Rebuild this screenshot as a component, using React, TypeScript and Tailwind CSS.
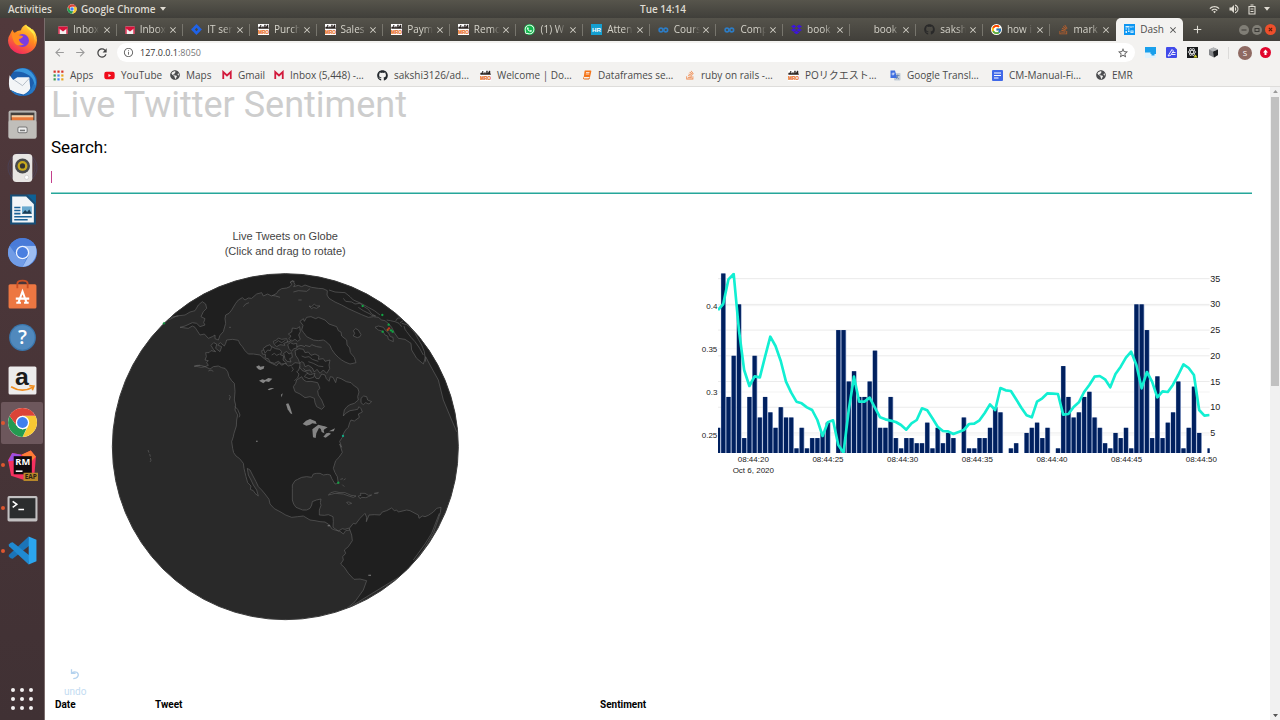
import type { ReactNode } from "react";
import { FaDropbox, FaGithub, FaJira, FaStackOverflow, FaWhatsapp, FaYoutube, FaGlobeAmericas } from "react-icons/fa";
import { FcGoogle } from "react-icons/fc";
import { MdArrowBack, MdArrowForward, MdRefresh, MdStarBorder, MdInfoOutline, MdWifi, MdVolumeUp, MdClose, MdAdd } from "react-icons/md";

/* ---------- small favicons ---------- */

const Gmail = ({ boxed = false }: { boxed?: boolean }) => (
  <svg viewBox="0 0 20 20" className="size-[10px] shrink-0">
    {boxed && <rect x="1" y="3" width="18" height="15" fill="#f4f0f0" />}
    {boxed && <path d="M1 3h18v3l-9 7-9-7z" fill="#d8123a" />}
    {boxed ? (
      <path d="M2 18V4M18 4v14" stroke="#d8123a" strokeWidth="2.500" />
    ) : (
      <path d="M2.500 18V4l7.500 7 7.500-7v14" fill="none" stroke="#d21a3c" strokeWidth="3.600" />
    )}
  </svg>
);

const Mro = () => (
  <svg viewBox="0 0 30 30" className="size-[11px] shrink-0">
    <rect width="30" height="30" fill="#fff" />
    <path d="M1 8q3-3 5 0V3h3v6h3V6h3v3h2V2h4v7l3-5V2h4v6l2 5H1z" fill="#2b2422" />
    <text x="15" y="26" fontSize="13" fontWeight="700" textAnchor="middle" fill="#e8722c" stroke="#e8722c" strokeWidth=".6" fontFamily="Liberation Sans, sans-serif">MRO</text>
  </svg>
);

const Rings = () => (
  <svg viewBox="0 0 22 12" className="w-[11px] shrink-0" fill="none" stroke="#2d7cc4" strokeWidth="3.200">
    <circle cx="6" cy="6" r="3.800" />
    <circle cx="15.500" cy="6" r="3.800" />
  </svg>
);

const Rank = () => (
  <svg viewBox="0 0 30 30" className="size-[11px] shrink-0">
    <rect width="30" height="30" fill="#149fd0" />
    <text x="15" y="21" fontSize="17" fontWeight="700" textAnchor="middle" fill="#fff" fontFamily="Liberation Sans, sans-serif">HR</text>
  </svg>
);

const DashLogo = () => (
  <svg viewBox="0 0 22 22" className="size-[11px] shrink-0">
    <rect width="22" height="22" fill="#0d96f2" />
    <path d="M3 4h8v3H3zM13 4h2v4h-2zM17 4h2v3h-2zM3 9h3v2H3zM8 9h3v2H8zM3 14h3v4H3zM8 13h3v3H8zM13 13h6v5h-6z" fill="#d7f1ff" />
    <rect x="15" y="14.500" width="2" height="2" fill="#0d96f2" />
  </svg>
);

const AppsGrid = () => (
  <svg viewBox="0 0 20 20" className="size-[11px] shrink-0">
    {["#d93025", "#d93025", "#d93025", "#3a9a4c", "#4285f4", "#e8a51c", "#3a9a4c", "#4285f4", "#e8a51c"].map((c, i) => (
      <rect key={i} x={1 + (i % 3) * 7} y={1 + Math.floor(i / 3) * 7} width="4" height="4" fill={c} />
    ))}
  </svg>
);

const Book = () => (
  <svg viewBox="0 0 20 20" className="size-[10px] shrink-0">
    <path d="M6 1h11q2 0 1.600 2l-2.500 11H3.500L5 3Q5.200 1 6 1z" fill="#f5761a" />
    <path d="M8 5h7M7.500 8h7" stroke="#fff" strokeWidth="1.500" />
    <path d="M3 15q-1 3 2 3h9l1-3" fill="none" stroke="#e56a12" strokeWidth="2" />
  </svg>
);

const Translate = () => (
  <svg viewBox="0 0 22 22" className="size-[11px] shrink-0">
    <rect x="8" y="6" width="13" height="15" rx="1.500" fill="#c4cdd8" />
    <path d="M12 11h7M15.500 9v2q0 5-4 7M13 13q2 4 5 5" stroke="#5b7ba5" strokeWidth="1.400" fill="none" />
    <path d="M1 1h9l4 15H1z" fill="#3f6fe0" />
    <path d="M9.500 6.500H6.500v2h1.400Q7.500 10 6 10 4 10 4 8t2-2q.8 0 1.400.500" stroke="#fff" strokeWidth="1.200" fill="none" />
  </svg>
);

const Doc = () => (
  <svg viewBox="0 0 22 22" className="size-[11px] shrink-0">
    <rect width="22" height="22" rx="2" fill="#4068e8" />
    <path d="M4 6h14M4 11h14M4 16h9" stroke="#fff" strokeWidth="2.200" />
  </svg>
);

const Youtube = () => <FaYoutube className="size-[11px] shrink-0 text-[#f00b1a]" />;
const Globe = () => <FaGlobeAmericas className="size-[10px] shrink-0 text-[#4b4c4e]" />;

/* ---------- launcher icons ---------- */

const Svg = ({ children, title }: { children: ReactNode; title: string }) => (
  <svg viewBox="0 0 60 60" className="size-[31px]" role="img" aria-label={title}>
    {children}
  </svg>
);

const ChromeMark = () => (
  <>
    <circle cx="30" cy="30" r="28" fill="#fff" />
    <path d="M30 17H54.900A28 28 0 0 1 30 58L41.300 36.500z" fill="#f8c933" />
    <path d="M5.100 17.500 18.700 36.500 30 43.500 38 41 30 58A28 28 0 0 1 5.100 17.500z" fill="#249a50" />
    <path d="M5.100 17.500A28 28 0 0 1 54.900 17H30Q20 18 17 34z" fill="#dc4437" />
    <circle cx="30" cy="30" r="13" fill="#fff" />
    <circle cx="30" cy="30" r="10.500" fill="#3f80ee" />
  </>
);

const launchers: { name: string; active?: boolean; running?: boolean; art: ReactNode }[] = [
  {
    name: "Firefox",
    art: (
      <>
        <defs>
          <linearGradient id="ff" x1=".8" y1="0" x2=".3" y2="1">
            <stop offset="0" stopColor="#ffe23e" />
            <stop offset=".45" stopColor="#ff8a1e" />
            <stop offset="1" stopColor="#f22560" />
          </linearGradient>
        </defs>
        <path d="M6 20Q8 14 11 11q1 5 4 6 5-5 12-5 2-8 10-11 2 6 8 10l5-1q8 9 8 21c0 17-13 27-28 27S2 47 2 32q0-7 4-12z" fill="url(#ff)" />
        <path d="M36 2q2 6 9 11 12 10 8 27 5-14-3-24 9 9 8 20Q58 12 36 2z" fill="#fff04a" />
        <circle cx="30" cy="32" r="12.500" fill="#7b3ce0" />
        <path d="M9 18q10-1 14 4l8 1q-1 5-8 6 1 9 10 10-14 7-20-5-4-8-4-16z" fill="#ff8c20" />
      </>
    ),
  },
  {
    name: "Thunderbird",
    art: (
      <>
        <circle cx="31" cy="31" r="27" fill="#1c5fae" />
        <path d="M12 11q20-14 36 2 14 16 4 34 4-18-8-28-14-10-32-8z" fill="#3a97dd" />
        <path d="M5 18Q2 38 6 46l12 6 14 3q10-4 13-12L43 22 20 22 12 27z" fill="#f3f5f7" />
        <path d="m14 27 16 11 14-15" fill="none" stroke="#a5afba" strokeWidth="1.500" />
        <path d="M6 46Q14 58 30 58q-6-3-12-6zM51 34q-4 17-20 23 22 0 25-18z" fill="#2577c4" />
      </>
    ),
  },
  {
    name: "Files",
    art: (
      <>
        <rect x="3" y="3" width="54" height="54" rx="4" fill="#b5b3b0" />
        <rect x="7" y="7" width="46" height="17" fill="#433f3c" />
        <path d="M9 15h42v8H9z" fill="#e8793a" />
        <path d="M9 12h42v4H9z" fill="#f6d0a6" />
        <rect x="3" y="22" width="54" height="35" rx="3" fill="#c0beba" />
        <rect x="21" y="35" width="18" height="11" rx="3" fill="#eee" stroke="#777" strokeWidth="2" />
        <rect x="25" y="40" width="10" height="3" fill="#777" />
      </>
    ),
  },
  {
    name: "Rhythmbox",
    art: (
      <>
        <circle cx="30" cy="30" r="28" fill="none" stroke="#4c4052" strokeWidth="2" />
        <circle cx="30" cy="30" r="24" fill="none" stroke="#4c4052" strokeWidth="2" />
        <rect x="11" y="4" width="38" height="54" rx="7" fill="#e7e5e3" />
        <circle cx="30" cy="27" r="14.500" fill="#484a4c" />
        <circle cx="30" cy="27" r="9.500" fill="#c6a81e" />
        <circle cx="30" cy="27" r="5" fill="#333" />
        <circle cx="38" cy="49" r="4" fill="#fff" stroke="#bbb" />
      </>
    ),
  },
  {
    name: "LibreOffice Writer",
    art: (
      <>
        <path d="M6 1h32l18 18v40H6z" fill="#174f78" />
        <path d="M10 5h27l15 15v35H10z" fill="#f1f5f8" />
        <path d="M38 1h18v18z" fill="#0d6196" />
        <path d="M14 26h12M14 32h12M14 38h12M14 44h34M14 50h26" stroke="#1a6296" strokeWidth="3" />
        <rect x="29" y="24" width="19" height="14" fill="#68a9cf" />
        <path d="m29 38 6-7 4 4 4-5 5 8z" fill="#193e58" />
      </>
    ),
  },
  {
    name: "Chromium",
    art: (
      <>
        <circle cx="30" cy="30" r="28" fill="#4c7fd9" />
        <path d="M5 17 20 38q6 8 17 4L30 58Q9 57 3 38 0 27 5 17z" fill="#719ce6" />
        <path d="M30 17h25q5 14-2 26-8 14-23 15l11-20q4-12-11-21z" fill="#9dbdf2" />
        <path d="M5 17Q14 3 30 2q17 1 25 15H30z" fill="#4a7bd8" />
        <circle cx="30" cy="30" r="13" fill="#eff4ff" />
        <circle cx="30" cy="30" r="10.500" fill="#4a7fe0" />
      </>
    ),
  },
  {
    name: "Ubuntu Software",
    art: (
      <>
        <rect x="3" y="10" width="54" height="47" rx="3" fill="#ed7742" />
        <path d="M20 18V9q0-6 10-6t10 6v9" fill="none" stroke="#c94f24" strokeWidth="3.500" />
        <path d="m22 46 8-22 8 22M17 38h26M18 46h9M33 46h9" fill="none" stroke="#fff" strokeWidth="4" />
      </>
    ),
  },
  {
    name: "Help",
    art: (
      <>
        <circle cx="30" cy="30" r="26" fill="#3a76ac" />
        <circle cx="30" cy="30" r="23.500" fill="#5089bd" />
        <text x="30" y="43" fontSize="38" fontWeight="600" textAnchor="middle" fill="#fff" fontFamily="Open Sans, sans-serif">?</text>
      </>
    ),
  },
  {
    name: "Amazon",
    art: (
      <>
        <rect x="3" y="3" width="54" height="54" rx="3" fill="#edecec" />
        <text x="29" y="38" fontSize="48" fontWeight="700" textAnchor="middle" fill="#1b1b1b" fontFamily="Liberation Sans, sans-serif">a</text>
        <path d="M8 42q21 13 42 1M43 40l9 1-3 8" fill="none" stroke="#f08d1e" strokeWidth="3.200" />
      </>
    ),
  },
  { name: "Google Chrome", active: true, running: true, art: <ChromeMark /> },
  {
    name: "RubyMine",
    running: true,
    art: (
      <>
        <path d="M2 20 10 6l18 3L46 1l10 12-3 35-20 10L8 50z" fill="#f5315f" />
        <path d="M10 6 28 9 18 20 2 22z" fill="#9b4fe0" />
        <path d="M46 1 28 9l18 14 10-10z" fill="#fd7d36" />
        <rect x="13" y="12" width="35" height="35" fill="#100b0d" />
        <text x="30.500" y="29" fontSize="18" fontWeight="700" textAnchor="middle" fill="#fff" fontFamily="Open Sans, sans-serif">RM</text>
        <path d="M17 41h13" stroke="#fff" strokeWidth="3" />
        <rect x="32" y="44" width="28" height="16" fill="#b7872a" />
        <text x="46" y="56.500" fontSize="12.500" fontWeight="700" textAnchor="middle" fill="#2d2013" fontFamily="Open Sans, sans-serif">EAP</text>
      </>
    ),
  },
  {
    name: "Terminal",
    running: true,
    art: (
      <>
        <rect x="1" y="6" width="58" height="49" rx="3" fill="#c2c0c1" />
        <rect x="5" y="10" width="50" height="39" fill="#2b2d2e" />
        <path d="m11 16 8 6-8 6M22 32h11" fill="none" stroke="#fff" strokeWidth="3" />
      </>
    ),
  },
  {
    name: "Visual Studio Code",
    running: true,
    art: (
      <>
        <path d="M42 3 4 38l-1 3 4 4 4 1L43 21z" fill="#1b74b8" />
        <path d="M42 57 4 22l-1-3 4-4 4-1 32 25z" fill="#1f8ad2" />
        <path d="M42 3 57 9v42l-15 6z" fill="#2ba5ee" />
      </>
    ),
  },
];

/* ---------- browser chrome ---------- */

const github = (cls: string) => <FaGithub className={`size-[11px] shrink-0 ${cls}`} />;

const tabs: { label: string; icon: ReactNode }[] = [
  { label: "Inbox", icon: <Gmail boxed /> },
  { label: "Inbox", icon: <Gmail boxed /> },
  { label: "IT ser", icon: <FaJira className="size-[11px] shrink-0 text-[#1f62e8]" /> },
  { label: "Purch", icon: <Mro /> },
  { label: "Sales", icon: <Mro /> },
  { label: "Paym", icon: <Mro /> },
  { label: "Remo", icon: <Mro /> },
  { label: "(1) W", icon: <FaWhatsapp className="size-[11px] shrink-0 rounded-full bg-[#12b84d] text-white" /> },
  { label: "Atten", icon: <Rank /> },
  { label: "Cours", icon: <Rings /> },
  { label: "Comp", icon: <Rings /> },
  { label: "book", icon: <FaDropbox className="size-[11px] shrink-0 text-[#3c14dc]" /> },
  { label: "book", icon: <span className="size-[11px] shrink-0" /> },
  { label: "saksh", icon: github("text-[#292929]") },
  { label: "how i", icon: <FcGoogle className="size-[11px] shrink-0 rounded-full bg-white" /> },
  { label: "mark", icon: <FaStackOverflow className="size-[11px] shrink-0 text-[#b85f2c]" /> },
  { label: "Dash", icon: <DashLogo /> },
];

const bookmarks: { label: string; icon: ReactNode }[] = [
  { label: "Apps", icon: <AppsGrid /> },
  { label: "YouTube", icon: <Youtube /> },
  { label: "Maps", icon: <Globe /> },
  { label: "Gmail", icon: <Gmail /> },
  { label: "Inbox (5,448) -…", icon: <Gmail /> },
  { label: "sakshi3126/ad…", icon: github("text-[#24292e]") },
  { label: "Welcome | Do…", icon: <Mro /> },
  { label: "Dataframes se…", icon: <Book /> },
  { label: "ruby on rails -…", icon: <FaStackOverflow className="size-[10px] shrink-0 text-[#ef8445]" /> },
  { label: "POリクエスト…", icon: <Mro /> },
  { label: "Google Transl…", icon: <Translate /> },
  { label: "CM-Manual-Fi…", icon: <Doc /> },
  { label: "EMR", icon: <Globe /> },
];

function TopBar() {
  return (
    <header className="flex h-[18px] shrink-0 items-center bg-linear-to-b from-[#57554c] to-[#403f3a] text-[10px] font-semibold text-[#dfdbd2]">
      <div className="flex w-1/2 items-center">
        <button className="ml-2 w-[59px] text-left">Activities</button>
        <button className="flex items-center gap-1">
          <svg viewBox="0 0 60 60" className="size-[10px]"><ChromeMark /></svg>
          Google Chrome
          <svg viewBox="0 0 8 5" className="w-[6px]"><path d="M0 0h8L4 5z" fill="#dfdbd2" /></svg>
        </button>
      </div>
      <time>Tue 14:14</time>
      <div className="mr-[10px] ml-auto flex items-center gap-2">
        <MdWifi className="size-[11px]" />
        <MdVolumeUp className="size-[12px]" />
        <svg viewBox="0 0 16 22" className="h-[11px]" fill="none" stroke="#dfdbd2" strokeWidth="2.200">
          <path d="M2 5h12v15H2zM5 2h6M5 10h6M5 15h6" />
        </svg>
        <svg viewBox="0 0 8 5" className="w-[6px]"><path d="M0 0h8L4 5z" fill="#dfdbd2" /></svg>
      </div>
    </header>
  );
}

function Dock() {
  return (
    <nav className="flex w-[45px] shrink-0 flex-col justify-between border-r border-[#7b6d6d] bg-linear-to-b from-[#51393c] to-[#403134]">
      <ul className="grid h-[554px] auto-rows-fr">
        {launchers.map((l) => (
          <li key={l.name} className="flex">
            <button aria-label={l.name} className={l.active ? "relative mx-px flex flex-1 items-center justify-center rounded-[2px] bg-[#6d575c]" : "relative mx-px flex flex-1 items-center justify-center"}>
              {l.running && <span className="absolute top-1/2 left-0 size-[4px] -translate-y-1/2 rounded-full bg-[#dd5730]" />}
              <Svg title={l.name}>{l.art}</Svg>
            </button>
          </li>
        ))}
      </ul>
      <button aria-label="Show applications" className="mb-[10px] grid grid-cols-3 gap-[5px] self-center">
        {Array.from({ length: 9 }, (_, i) => (
          <span key={i} className="size-[4px] rounded-full bg-[#f4f1f1]" />
        ))}
      </button>
    </nav>
  );
}

function TabStrip() {
  return (
    <div className="flex h-[23px] bg-linear-to-b from-[#55534b] to-[#413f3a] pl-[5px] text-[10px]">
      <div role="tablist" className="flex flex-1">
        {tabs.map((t, i) => {
          const on = i === tabs.length - 1;
          return (
            <button
              key={i}
              role="tab"
              aria-selected={on}
              className={
                on
                  ? "flex min-w-0 flex-1 basis-0 items-center rounded-t-[5px] bg-[#f3f2f0] pl-2 text-[#4c4c4c]"
                  : "flex min-w-0 flex-1 basis-0 items-center pl-2 text-[#d5d3ca]"
              }
            >
              {t.icon}
              <span className={on ? "ml-[5px] text-left whitespace-nowrap" : "ml-[5px] w-[26px] text-left whitespace-nowrap [mask-image:linear-gradient(to_right,#000_65%,transparent)]"}>
                {t.label}
              </span>
              <MdClose className="ml-auto size-[10px] shrink-0" />
              <span className={i >= tabs.length - 2 ? "ml-[4px] h-3 w-px" : "ml-[4px] h-3 w-px bg-[#77756d]"} />
            </button>
          );
        })}
      </div>
      <div className="flex w-[97px] items-center">
        <button aria-label="New tab" className="ml-2 text-[#e0ded6]"><MdAdd className="size-[13px]" /></button>
        <div className="mr-1 ml-auto flex gap-[3px]">
          <button aria-label="Minimize"><svg viewBox="0 0 20 20" className="size-[10px]"><circle cx="10" cy="10" r="10" fill="#807e76" /><path d="M5 10h10" stroke="#3c3b37" strokeWidth="2" /></svg></button>
          <button aria-label="Maximize"><svg viewBox="0 0 20 20" className="size-[10px]"><circle cx="10" cy="10" r="10" fill="#807e76" /><rect x="6" y="7" width="8" height="6" fill="none" stroke="#3c3b37" strokeWidth="2" /></svg></button>
          <button aria-label="Close"><svg viewBox="0 0 20 20" className="size-[11px]"><circle cx="10" cy="10" r="10" fill="#ee4f2b" /><path d="m7 7 6 6m0-6-6 6" stroke="#5b1d0c" strokeWidth="2" /></svg></button>
        </div>
      </div>
    </div>
  );
}

function Toolbar() {
  return (
    <div className="flex h-[23px] items-center bg-[#f3f2f0] pr-[9px] pl-2">
      <button aria-label="Back" className="text-[#9b9b9b]"><MdArrowBack className="size-[13px]" /></button>
      <button aria-label="Forward" className="ml-2 text-[#9b9b9b]"><MdArrowForward className="size-[13px]" /></button>
      <button aria-label="Reload" className="ml-2 text-[#444]"><MdRefresh className="size-[14px]" /></button>
      <div className="ml-2 flex h-[19px] flex-1 items-center rounded-full bg-white pr-1.5 pl-1.5">
        <MdInfoOutline className="size-[11px] shrink-0 text-[#666]" />
        <p className="ml-1.5 flex-1 text-[9px] leading-[19px] text-[#777]">
          <span className="text-[#333]">127.0.0.1</span>:8050
        </p>
        <button aria-label="Bookmark this page" className="text-[#555]"><MdStarBorder className="size-[12px]" /></button>
      </div>
      <div className="ml-[10px] flex items-center gap-[10px]">
        <svg viewBox="0 0 22 22" className="size-[11px]"><rect width="22" height="22" fill="#dff2fd" /><path d="M0 0h22v14H11v-3H0z" fill="#1aa0ec" /><path d="M13 14h6v3h-6z" fill="#1aa0ec" /></svg>
        <svg viewBox="0 0 22 22" className="size-[11px]"><rect width="22" height="22" rx="2" fill="#414bea" /><path d="m4 18 8-13 3 3-6 9zM12 11h7M11 15h8" stroke="#fff" strokeWidth="1.800" fill="none" /><path d="M17 0h5v5z" fill="#f3f2f0" /></svg>
        <svg viewBox="0 0 22 22" className="size-[11px]"><rect width="22" height="22" fill="#17191a" /><g fill="none" stroke="#e6e6e6" strokeWidth="1.500"><ellipse cx="10" cy="10" rx="8" ry="3.200" /><ellipse cx="10" cy="10" rx="8" ry="3.200" transform="rotate(60 10 10)" /><ellipse cx="10" cy="10" rx="8" ry="3.200" transform="rotate(120 10 10)" /></g><path d="m17 15 4 6h-8z" fill="#d8d82d" /></svg>
        <svg viewBox="0 0 22 22" className="size-[11px]"><path d="m2 5 9-4 9 4v11l-8 5-10-5z" fill="#85878a" /><path d="m10 9 10-4v11l-8 5z" fill="#1d1f21" /><path d="m2 5 9-4 9 4-10 4z" fill="#b3b5b7" /></svg>
      </div>
      <span className="mx-[9px] h-3 w-px bg-[#dcdbd9]" />
      <span className="flex size-[14px] items-center justify-center rounded-full bg-[#8f6a62] text-[8px] text-white">S</span>
      <svg viewBox="0 0 22 22" className="ml-[8px] size-[11px]"><circle cx="11" cy="11" r="11" fill="#e1062c" /><path d="m11 5 5 6h-3v5H9v-5H6z" fill="#fff" /></svg>
    </div>
  );
}

function Bookmarks() {
  return (
    <nav className="grid h-[23px] grid-cols-[51px_66px_52px_52px_103px_103px_102px_103px_103px_102px_102px_104px_auto] items-center border-b border-[#dedddb] bg-[#f3f2f0] pl-2 text-[10px] text-[#4a4a4a]">
      {bookmarks.map((b) => (
        <a key={b.label} href="#" className="flex items-center gap-[6px] whitespace-nowrap">
          {b.icon}
          {b.label}
        </a>
      ))}
    </nav>
  );
}

/* ---------- globe ---------- */

const land = [
  // North and Central America
  "M365 360 383 358 400 361 405 372 412 380 420 392 430 402 445 402 465 405 478 416 490 425 502 431 515 437 522 428 530 436 540 430 550 438 560 436 570 428 585 430 584 442 592 452 605 456 612 466 620 470 626 462 633 475 642 476 650 462 660 465 664 476 672 484 676 470 684 472 692 488 696 472 708 476 724 485 738 488 748 498 758 504 762 516 758 530 760 540 748 550 735 554 726 560 718 570 715 588 722 580 735 572 748 570 758 568 762 560 768 566 772 576 760 582 763 592 748 603 738 600 734 608 730 622 722 630 716 640 712 652 704 664 710 682 704 672 712 697 702 712 692 722 685 745 690 758 697 770 700 790 690 792 684 782 680 775 676 765 667 763 655 765 645 760 635 760 625 762 620 772 605 770 590 772 578 778 570 782 562 795 562 805 562 840 566 852 573 862 593 870 605 870 615 865 620 855 622 845 634 840 648 837 646 848 648 856 643 870 643 885 658 886 670 884 684 890 685 905 684 922 700 933 712 926 720 928 733 924 735 930 722 932 715 942 705 934 690 930 680 926 675 916 660 906 645 905 630 902 615 900 595 888 578 890 560 892 542 885 525 875 508 866 495 852 492 838 480 822 470 810 460 800 453 785 444 768 435 750 427 745 430 765 438 780 445 795 455 810 460 828 450 820 445 812 436 808 438 798 428 788 423 770 420 758 417 745 415 730 404 716 393 708 386 698 383 685 380 665 385 650 387 640 394 618 395 600 398 585 390 570 392 555 388 540 390 515 388 490 380 482 372 470 368 455 360 445 350 443 340 438 325 440 315 447 300 440 290 442 268 438 285 436 300 440 310 436 305 428 310 422 300 420 304 410 302 398 312 398 318 392 332 395 325 388 318 376 326 368 335 372 332 385 345 395 350 380 338 375 346 368 358 378 362 370z",
  // South America
  "M733 925 745 910 752 912 765 895 780 880 785 892 784 905 792 885 808 884 825 885 832 876 845 872 860 864 868 872 875 870 880 876 905 870 915 872 930 880 940 885 942 895 952 888 960 890 970 886 985 876 995 865 1008 862 1006 878 1002 890 985 940 955 990 900 1060 720 1170 750 1145 775 1110 785 1082 765 1077 747 1078 730 1060 718 1042 707 1032 715 1020 713 1010 722 1000 718 990 730 980 742 962 740 945z",
  // Siberia, across the top to Europe
  "M183 300 195 298 215 288 240 285 255 276 270 272 280 255 292 245 302 252 305 265 295 275 288 290 300 296 296 308 300 315 285 320 275 310 262 308 240 318 225 322 250 325 262 318 270 322 285 345 298 342 310 355 322 350 330 345 330 356 340 360 345 346 355 335 362 310 360 296 362 285 372 280 380 270 392 250 400 240 412 233 420 240 430 234 440 235 455 222 470 218 475 228 488 222 500 228 515 220 520 212 530 206 545 204 555 200 560 193 556 186 564 182 570 194 566 200 580 196 590 200 600 195 620 202 640 205 654 206 667 212 666 225 672 235 690 246 710 255 730 266 750 275 770 284 790 292 805 290 820 292 830 300 840 302 852 312 860 322 868 338 880 355 900 358 918 370 920 390 935 415 955 432 962 410 975 435 1000 480 1015 540 1040 600 1055 635 1090 660 1090 90 180 90z",
  // Greenland
  "M585 304 595 296 598 304 605 292 618 290 632 296 640 292 660 300 672 312 695 320 700 332 708 336 710 348 725 360 726 375 734 384 736 398 748 412 753 428 735 432 720 426 710 420 700 412 690 402 680 388 675 376 662 364 655 360 640 362 625 360 605 350 596 338 590 330 594 316z",
  // Baffin and neighbours
  "M570 392 582 386 595 388 600 398 610 396 618 406 630 402 642 408 640 418 655 416 660 424 675 420 672 435 674 446 665 460 655 450 645 460 636 448 628 456 622 444 610 436 600 440 596 428 590 425 584 430 580 418 572 406z",
  "M470 392 480 388 484 378 492 384 500 380 512 386 524 388 530 395 526 404 536 408 534 420 545 430 530 432 520 424 508 430 495 426 490 416 480 414 482 404 472 402z",
  "M550 342 560 336 562 324 575 326 584 320 586 335 581 345 586 358 578 364 570 358 560 364 552 356 558 348z",
  "M475 385 485 378 495 374 500 382 496 392 488 390 480 400z",
  "M505 364 515 360 520 354 530 358 545 356 548 366 536 370 540 376 525 374 515 380 508 374z",
  "M548 374 556 368 565 372 575 370 576 384 566 386 560 394 552 386z",
  "M536 400 545 394 552 402 560 398 562 412 554 416 558 426 546 424 540 416z",
  "M598 470 606 460 616 464 630 460 626 472 612 476z",
  // Newfoundland, Iceland, British Isles, Svalbard
  "M768 535 776 528 785 530 788 540 800 545 792 552 782 548 775 554 768 548z",
  "M745 332 752 326 760 330 768 344 765 350 757 353 745 348 749 340z",
  "M810 322 820 318 835 322 842 332 850 338 856 350 864 352 865 365 850 358 848 348 840 345 834 334 820 330z",
  "M612 258 620 260 628 252 634 258 645 258 635 265 625 262 620 266z",
  // Caribbean
  "M670 825 678 818 690 815 705 818 720 818 738 826 753 828 745 832 732 828 715 822 690 820z",
  "M760 828 768 826 766 820 780 820 790 826 800 825 790 830 782 833 770 832 765 836z",
  "M725 847 732 846 740 850 730 853zM808 820 820 817 818 821z",
];

const coastLines =
  "M672 210 690 216 720 218 735 230 745 240 768 250 790 262 808 272 825 285M715 235 722 244 740 246 750 252 765 250 780 262 790 268 800 282 812 288 800 286 795 282 775 272 760 262M845 300 856 302 870 305 882 310 890 320M872 303 878 294 888 294 895 302 885 308M890 310 905 314 915 322 930 340 940 358 950 375 958 395 962 425M897 318 900 328 905 335 918 352 930 365 944 385 955 405M1003 880 980 940 960 972 925 1020M415 260 422 252 432 248M372 322h6M500 226 512 228 525 232M510 370 520 362 530 368 542 360M585 440 580 452 575 455 582 462 578 474 568 482M595 445 602 452 615 450 620 458M560 360 552 366 545 365M600 376 615 380 620 374 635 380 650 382M575 380 588 376 600 380M500 405 508 400 515 406 524 402M560 440 565 448 560 455M590 408 600 412 612 410 622 418 640 424M610 425 625 430 640 438 655 440M372 525 376 530 373 540M390 560 398 568 405 585 402 592M129 690l3 8M134 702l2 8M136 714l2 7-3 5M710 178q-6-4-10 4M555 188q4-8 14-4M190 296 205 290 220 288M268 440 276 436 285 436M310 453 318 450 325 454M565 216 580 212 605 214 615 206M580 240h10M706 778 714 776M716 780l6-4M712 794l6 6";

const lakes = [
  "M453 440 462 436 466 440 478 438 476 446 466 450 460 448z",
  "M462 482 472 478 480 480 490 474 502 476 492 486 482 484 475 490z",
  "M488 508 498 504 508 505 492 511z",
  "M528 524 533 520 530 532z",
  "M543 552 550 550 555 560 562 583 556 580 548 568z",
  "M593 612 603 602 615 597 632 604 635 612 622 610 615 614 604 617z",
  "M622 628 640 614 652 617 668 622 655 630 642 624 634 640 632 654 624 652z",
  "M645 618 662 620 656 630 658 640 650 636z",
  "M655 650 664 640 672 638 678 641 662 653z",
  "M672 634 690 625 686 634z",
  "M453 662h5v3h-5zM668 916h7v3h-7zM790 1064h8v3h-8z",
];

const tweets: [number, number, string][] = [
  [177, 310, "#0f8f3c"],
  [773, 258, "#12a343"],
  [832, 285, "#12a343"],
  [851, 314, "#12a343"],
  [833, 335, "#12a343"],
  [852, 325, "#c8321e"],
  [858, 331, "#12a343"],
  [863, 335, "#12a343"],
  [848, 330, "#a8541e"],
  [714, 648, "#12a884"],
  [700, 788, "#12a343"],
];

function GlobeFigure() {
  return (
    <figure className="flex w-[39%] flex-col items-center pt-[35px]">
      <figcaption className="text-center font-['Liberation_Sans',Arial,sans-serif] text-[11px] leading-[15px] text-[#444]">
        Live Tweets on Globe
        <br />
        (Click and drag to rotate)
      </figcaption>
      <svg viewBox="0 126 1080 1104" className="mt-[3px] h-[368px] w-[360px]" role="img" aria-label="Globe">
        <defs>
          <clipPath id="disc"><circle cx="541" cy="680" r="519" /></clipPath>
        </defs>
        <circle cx="541" cy="680" r="519" fill="#292929" />
        <g clipPath="url(#disc)" stroke="#626262" strokeWidth="1.900" strokeLinejoin="round">
          {land.map((d, i) => <path key={i} d={d} fill="#1f1f1f" />)}
          <path d="M590 470 596 480 605 485 618 484 638 488 645 505 638 512 640 525 650 540 658 560 650 568 635 560 630 548 628 535 615 530 600 533 585 522 570 515 565 500 572 490 575 480z" fill="#292929" />
          <path d={coastLines} fill="none" />
          <g fill="#858585" stroke="none">{lakes.map((d, i) => <path key={i} d={d} />)}</g>
        </g>
        <circle cx="541" cy="680" r="519" fill="none" stroke="#3c3c3c" strokeWidth="3" />
        {tweets.map(([x, y, c], i) => <circle key={i} cx={x} cy={y} r="3.500" fill={c} />)}
      </svg>
    </figure>
  );
}

/* ---------- volume / sentiment chart ---------- */

const volume = [
  6, 36, 12, 20, 30, 4, 12, 20, 8, 12, 9, 6, 10, 8, 8, 2, 6, 2, 4, 4, 5, 7, 0, 25, 25, 15, 17, 12, 12, 15, 21, 6, 6, 12, 4, 2, 4, 4, 3, 3, 7, 2, 6, 3, 5, 4, 0, 8, 2, 2, 4, 4, 6, 10, 9, 0, 2, 3, 0, 5, 6, 7, 4, 6, 0, 2, 18, 12, 8, 9, 12, 13, 8, 6, 3, 2, 5, 4, 6, 2, 30, 30, 25, 4, 16, 4, 7, 9, 15, 2, 6, 14, 5, 0, 2,
];

const sentiment = [
  150, 132, 58, 42, 210, 330, 378, 349, 352, 290, 230, 258, 303, 365, 398, 425, 430, 442, 450, 480, 528, 487, 481, 555, 578, 450, 350, 425, 425, 413, 443, 472, 478, 482, 486, 495, 509, 490, 480, 445, 451, 475, 500, 513, 514, 522, 516, 510, 492, 491, 481, 459, 433, 450, 384, 391, 393, 418, 443, 466, 472, 425, 415, 400, 401, 402, 464, 462, 441, 427, 396, 375, 350, 348, 358, 382, 342, 320, 293, 275, 315, 385, 336, 365, 412, 394, 396, 374, 345, 313, 324, 345, 450, 467, 465,
];

const px = (k: number) => 84 + k * 15.69;
const vy = (v: number) => 596 - v * 15.43;

function Chart() {
  return (
    <svg viewBox="0 0 1680 675" className="mt-[66px] mr-[2px] ml-auto h-[225px] w-[560px] shrink-0" role="img" aria-label="Volume and sentiment over time">
      <defs>
        <clipPath id="plot"><rect x="84" y="38" width="1475" height="541" /></clipPath>
      </defs>
      <g stroke="#ebebeb" strokeWidth="3">
        {[35, 30, 25, 20, 15, 10, 5].map((v) => <path key={v} d={`M84 ${vy(v)}H1559`} />)}
        {[137, 266, 396, 525].map((y) => <path key={y} d={`M84 ${y}H1559`} stroke="#f3f3f3" />)}
      </g>
      <g clipPath="url(#plot)">
        <g fill="#8ba0c8">
          {volume.map((v, k) => v > 0 && <rect key={k} x={px(k) - 7} y={vy(v)} width="15" height={600 - vy(v)} />)}
        </g>
        <g fill="#00205f">
          {volume.map((v, k) => v > 0 && <rect key={k} x={px(k) - 6} y={vy(v)} width="12" height={600 - vy(v)} />)}
        </g>
        <polyline points={sentiment.map((y, k) => `${px(k)},${y}`).join(" ")} fill="none" stroke="#12efd2" strokeWidth="8" strokeLinejoin="round" />
      </g>
      <g fontFamily="Liberation Sans, Arial, sans-serif" fontSize="24" fill="#222">
        {["0.4", "0.35", "0.3", "0.25"].map((t, i) => <text key={t} x="82" y={146 + i * 129} textAnchor="end">{t}</text>)}
        {[35, 30, 25, 20, 15, 10, 5].map((v) => <text key={v} x="1561" y={vy(v) + 9} fontSize="27">{v}</text>)}
        {[20, 25, 30, 35, 40, 45, 50].map((s, i) => <text key={s} x={190 + i * 224} y="606" textAnchor="middle">{`08:44:${s}`}</text>)}
        <text x="190" y="638" textAnchor="middle">Oct 6, 2020</text>
      </g>
    </svg>
  );
}

function Dashboard() {
  return (
    <main className="flex-1 overflow-hidden pr-[18px] pl-[6px] font-[Roboto,sans-serif]">
      <h1 className="text-[36px] leading-[37px] text-[#cdcdcd]">Live Twitter Sentiment</h1>
      <label htmlFor="term" className="mt-[11px] block text-[17px] leading-[24px] text-black">Search:</label>
      <div className="relative">
        <input id="term" type="text" className="block h-[35px] w-full border-b border-[#26a69a] caret-transparent shadow-[inset_0_-1px_0_#8fd3cc] outline-none" />
        <span className="absolute top-3 left-0 h-3 w-px bg-[#c4408c]" />
      </div>
      <section className="flex">
        <GlobeFigure />
        <Chart />
      </section>
      <button className="mt-[37px] ml-[13px] flex flex-col items-center text-[10px] leading-[14px] text-[#c3dcf2]">
        <svg viewBox="0 0 24 24" className="mb-1 size-[14px]" fill="none" stroke="#b4d2ee" strokeWidth="2.200">
          <path d="M6 4v7h7M7 10q4-3 8-1 4 3 2 7-2 4-8 4" />
        </svg>
        undo
      </button>
      <table className="w-full table-fixed text-left text-[10px] leading-[12px] text-black">
        <colgroup>
          <col className="w-[100px]" />
          <col className="w-[445px]" />
          <col />
        </colgroup>
        <thead>
          <tr>
            <th scope="col" className="pl-1 font-bold">Date</th>
            <th scope="col" className="pl-1 font-bold">Tweet</th>
            <th scope="col" className="pl-1 font-bold">Sentiment</th>
          </tr>
        </thead>
      </table>
    </main>
  );
}

function Scrollbar() {
  return (
    <div className="flex w-[10px] shrink-0 flex-col items-center justify-between bg-[#f1f1f1] py-[3px]">
      <svg viewBox="0 0 8 5" className="w-[5px]"><path d="M4 0 8 5H0z" fill="#999" /></svg>
      <div className="mt-[4px] mb-auto h-[46%] w-[8px] bg-[#c1c1c1]" />
      <svg viewBox="0 0 8 5" className="w-[5px]"><path d="M0 0h8L4 5z" fill="#555" /></svg>
    </div>
  );
}

export default function App() {
  return (
    <div className="flex h-screen flex-col overflow-hidden bg-white font-['Open_Sans','Noto_Sans_CJK_JP',sans-serif]">
      <TopBar />
      <div className="flex min-h-0 flex-1">
        <Dock />
        <div className="flex min-w-0 flex-1 flex-col">
          <TabStrip />
          <Toolbar />
          <Bookmarks />
          <div className="flex min-h-0 flex-1">
            <Dashboard />
            <Scrollbar />
          </div>
        </div>
      </div>
    </div>
  );
}
